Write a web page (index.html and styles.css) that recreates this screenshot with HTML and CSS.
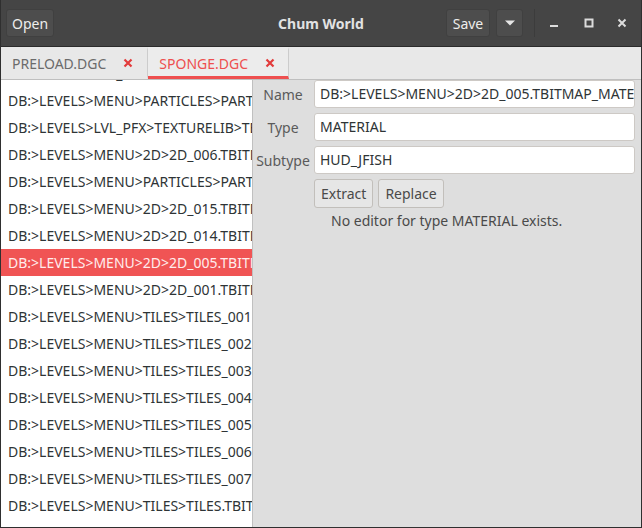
FILE: index.html
```html
<!DOCTYPE html>
<html>
<head>
<meta charset="utf-8">
<title>Chum World</title>
<link rel="stylesheet" href="styles.css">
</head>
<body>
<div class="window">
  <header class="headerbar">
    <div class="hb-left">
      <button class="hb-btn">Open</button>
    </div>
    <div class="hb-title">Chum World</div>
    <div class="hb-right">
      <button class="hb-btn hb-save">Save</button>
      <button class="hb-btn hb-menu"><svg width="12" height="8" viewBox="0 0 12 8"><path d="M1 1.5h10L6 6.5z" fill="#e6e6e6"/></svg></button>
      <span class="hb-sep"></span>
      <button class="wc wc-min"><svg width="10" height="10" viewBox="0 0 10 10"><rect x="1" y="7" width="8" height="2" fill="#dcdcdc"/></svg></button>
      <button class="wc wc-max"><svg width="10" height="10" viewBox="0 0 10 10"><rect x="1.5" y="1.5" width="7" height="7" fill="none" stroke="#dcdcdc" stroke-width="2"/></svg></button>
      <button class="wc"><svg width="10" height="10" viewBox="0 0 10 10"><path d="M1.5 1.5l7 7M8.5 1.5l-7 7" stroke="#dcdcdc" stroke-width="2"/></svg></button>
    </div>
  </header>
  <nav class="tabs">
    <div class="tab">
      <span class="tab-label">PRELOAD.DGC</span>
      <span class="tab-close"><svg width="10" height="10" viewBox="0 0 10 10"><path d="M1.5 1.5l7 7M8.5 1.5l-7 7" stroke="#e23b3b" stroke-width="2.2"/></svg></span>
    </div>
    <div class="tab active">
      <span class="tab-label">SPONGE.DGC</span>
      <span class="tab-close"><svg width="10" height="10" viewBox="0 0 10 10"><path d="M1.5 1.5l7 7M8.5 1.5l-7 7" stroke="#e23b3b" stroke-width="2.2"/></svg></span>
    </div>
  </nav>
  <main class="content">
    <div class="list">
      <div class="list-inner">
        <div class="row">DB:&gt;LEVELS&gt;LVL_PFX&gt;PARTICLES&gt;PARTICLE</div>
        <div class="row">DB:&gt;LEVELS&gt;MENU&gt;PARTICLES&gt;PARTICLE_01</div>
        <div class="row">DB:&gt;LEVELS&gt;LVL_PFX&gt;TEXTURELIB&gt;TEXTURE</div>
        <div class="row">DB:&gt;LEVELS&gt;MENU&gt;2D&gt;2D_006.TBITMAP_MATERIAL</div>
        <div class="row">DB:&gt;LEVELS&gt;MENU&gt;PARTICLES&gt;PARTICLE_02</div>
        <div class="row">DB:&gt;LEVELS&gt;MENU&gt;2D&gt;2D_015.TBITMAP_MATERIAL</div>
        <div class="row">DB:&gt;LEVELS&gt;MENU&gt;2D&gt;2D_014.TBITMAP_MATERIAL</div>
        <div class="row selected">DB:&gt;LEVELS&gt;MENU&gt;2D&gt;2D_005.TBITMAP_MATERIAL</div>
        <div class="row">DB:&gt;LEVELS&gt;MENU&gt;2D&gt;2D_001.TBITMAP_MATERIAL</div>
        <div class="row">DB:&gt;LEVELS&gt;MENU&gt;TILES&gt;TILES_001.TBITMAP</div>
        <div class="row">DB:&gt;LEVELS&gt;MENU&gt;TILES&gt;TILES_002.TBITMAP</div>
        <div class="row">DB:&gt;LEVELS&gt;MENU&gt;TILES&gt;TILES_003.TBITMAP</div>
        <div class="row">DB:&gt;LEVELS&gt;MENU&gt;TILES&gt;TILES_004.TBITMAP</div>
        <div class="row">DB:&gt;LEVELS&gt;MENU&gt;TILES&gt;TILES_005.TBITMAP</div>
        <div class="row">DB:&gt;LEVELS&gt;MENU&gt;TILES&gt;TILES_006.TBITMAP</div>
        <div class="row">DB:&gt;LEVELS&gt;MENU&gt;TILES&gt;TILES_007.TBITMAP</div>
        <div class="row">DB:&gt;LEVELS&gt;MENU&gt;TILES&gt;TILES.TBITMAP</div>
        <div class="row">DB:&gt;LEVELS&gt;MENU&gt;TILES&gt;TILES_008.TBITMAP</div>
      </div>
    </div>
    <section class="panel">
      <div class="form">
        <label class="lbl">Name</label>
        <div class="entry">DB:&gt;LEVELS&gt;MENU&gt;2D&gt;2D_005.TBITMAP_MATERIAL</div>
        <label class="lbl">Type</label>
        <div class="entry">MATERIAL</div>
        <label class="lbl">Subtype</label>
        <div class="entry">HUD_JFISH</div>
        <span></span>
        <div class="actions">
          <button class="btn">Extract</button>
          <button class="btn">Replace</button>
        </div>
        <span></span>
        <div class="note">No editor for type MATERIAL exists.</div>
      </div>
    </section>
  </main>
</div>
</body>
</html>
```
FILE: styles.css
```css
* { box-sizing: border-box; }
html, body { margin: 0; padding: 0; background: #3a3a3a; }
body { font-family: "Noto Sans", "DejaVu Sans", sans-serif; font-size: 14px; }
button { font-family: inherit; font-size: 14px; cursor: default; }

.window {
  width: 642px;
  height: 528px;
  display: flex;
  flex-direction: column;
  border: 1px solid #2f2f2f;
  border-top: none;
  background: #dedede;
  overflow: hidden;
}

.headerbar {
  height: 47px;
  flex: none;
  background: #454545;
  border-bottom: 1px solid #2b2b2b;
  display: grid;
  grid-template-columns: 1fr auto 1fr;
  align-items: center;
  padding: 0 6px 0 6px;
  margin: 0 -1px;
}
.hb-left { display: flex; }
.hb-right { display: flex; justify-content: flex-end; align-items: center; gap: 0; }
.hb-title { color: #e2e2e2; font-weight: bold; font-size: 14px; }
.hb-btn {
  height: 28px;
  padding: 0 5px;
  background: #4d4d4d;
  color: #eeeeec;
  border: 1px solid #404040;
  border-radius: 3px;
}
.hb-save { min-width: 44px; margin-right: 6px; }
.hb-menu { width: 27px; display: flex; align-items: center; justify-content: center; padding: 0; }
.hb-sep { width: 1px; height: 28px; background: #3c3c3c; margin: 0 5px 0 11px; }
.wc {
  width: 28px; height: 28px; padding: 0;
  background: transparent; border: none;
  display: flex; align-items: center; justify-content: center;
}
.wc-min { margin-right: 7px; }
.wc-max { margin-right: 5px; }

.tabs {
  height: 33px;
  flex: none;
  display: flex;
  background: #e8e8e8;
  border-bottom: 1px solid #bfbfbf;
}
.tab {
  display: flex;
  align-items: center;
  padding: 0 14px 0 11px;
  gap: 17px;
  border-right: 1px solid #cccccc;
  border-bottom: 3px solid transparent;
  border-top: 3px solid transparent;
}
.tab + .tab { padding-left: 11px; padding-right: 13px; }
.tab-label { color: #6b6b6b; }
.tab.active { border-bottom-color: #ee4f4f; background: #ececec; }
.tab.active .tab-label { color: #ee4f4f; }
.tab-close { display: flex; align-items: center; }

.content {
  flex: 1;
  display: flex;
  min-height: 0;
}
.list {
  width: 252px;
  flex: none;
  background: #ffffff;
  border-right: 1px solid #c0c0c0;
  overflow: hidden;
}
.list-inner { margin-top: -20px; }
.row {
  height: 27px;
  line-height: 27px;
  padding-left: 7px;
  color: #2e3436;
  white-space: nowrap;
  overflow: hidden;
}
.row.selected { background: #f05454; color: #ffecec; }

.panel { flex: 1; padding: 0 6px 0 0; background: #dedede; }
.form {
  display: grid;
  grid-template-columns: 60px 1fr;
  column-gap: 1px;
  row-gap: 5px;
  align-items: center;
}
.lbl { color: #5a5a5a; text-align: center; }
.entry {
  height: 28px;
  background: #ffffff;
  border: 1px solid #cdc9c5;
  border-radius: 3px;
  padding: 0 5px;
  line-height: 26px;
  color: #2e3436;
  white-space: nowrap;
  overflow: hidden;
}
.actions { display: flex; gap: 5px; }
.btn {
  height: 29px;
  padding: 0 6px;
  background: #e6e6e6;
  border: 1px solid #c2bfbb;
  border-radius: 3px;
  color: #4a4a4a;
}
.note { color: #4a4a4a; padding-left: 17px; margin-top: -2px; }
```
